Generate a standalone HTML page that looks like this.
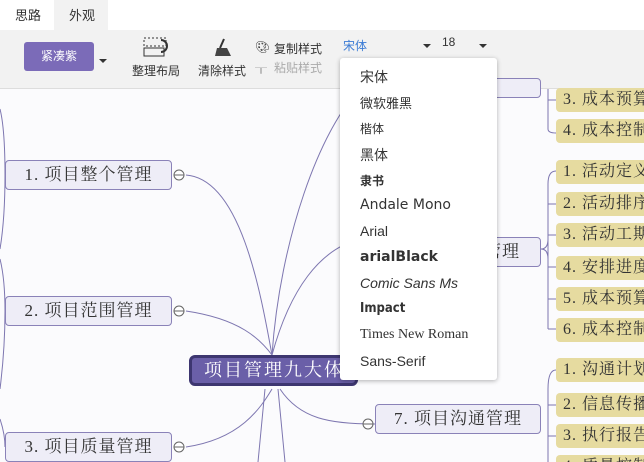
<!DOCTYPE html><html style="overflow:hidden"><head><meta charset="utf-8"><style>
html,body{overflow:hidden;height:462px}
body{margin:0;width:644px;position:relative;background:#fbfbfd;font-family:"Liberation Sans","Noto Sans CJK SC",sans-serif;}
.a{position:absolute}
.tb{font-size:12px;color:#333}
.node{position:absolute;background:#eeedf7;border:1px solid #8a82b8;border-radius:4px;font-family:"Liberation Serif","Noto Serif CJK SC",serif;font-size:17px;color:#333;text-align:center;letter-spacing:1px;box-sizing:border-box}
.leaf{position:absolute;left:556px;width:100px;height:24px;background:#e6dba0;border-radius:4px;font-family:"Liberation Serif","Noto Serif CJK SC",serif;font-size:16px;color:#333;line-height:24px;padding-left:7px;letter-spacing:1px;box-sizing:border-box}
.dd div{position:absolute;left:20px;font-size:14px;color:#333}
</style></head><body>
<div class="a" style="left:0;top:0;width:644px;height:30px;background:#fff"></div>
<div class="a" style="left:54px;top:0;width:54px;height:30px;background:#f2f2f2"></div>
<div class="a tb" style="left:15px;top:5px;font-size:13px">思路</div>
<div class="a tb" style="left:69px;top:5px;font-size:13px">外观</div>
<div class="a" style="left:0;top:30px;width:644px;height:58px;background:#f2f2f2;border-bottom:1px solid #ddd"></div>
<div class="a" style="left:24px;top:42px;width:70px;height:29px;background:#7b6bb8;border-radius:3px;color:#fff;font-size:12px;text-align:center;line-height:29px">紧凑紫</div>
<div class="a" style="left:99px;top:59px;border:4px solid transparent;border-top:4px solid #333"></div>
<svg class="a" style="left:143px;top:36px" width="28" height="24"><rect x="1" y="2" width="22" height="8" fill="none" stroke="#333" stroke-dasharray="2 2"/><rect x="1" y="12" width="20" height="8" fill="none" stroke="#333"/><path d="M18 4a6 6 0 0 1 0 12" fill="none" stroke="#333" stroke-width="2"/></svg>
<div class="a tb" style="left:132px;top:62px">整理布局</div>
<svg class="a" style="left:212px;top:37px" width="22" height="22"><path d="M12 2l-4 9" stroke="#333" stroke-width="2"/><path d="M5 11l10 0 4 8H3z" fill="#444"/></svg>
<div class="a tb" style="left:198px;top:62px">清除样式</div>
<div class="a tb" style="left:255px;top:40px">🎨︎</div>
<div class="a tb" style="left:274px;top:40px">复制样式</div>
<div class="a tb" style="left:255px;top:59px;color:#aaa">┰</div>
<div class="a tb" style="left:274px;top:59px;color:#aaa">粘贴样式</div>
<div class="a tb" style="left:343px;top:37px;color:#3a7bd5">宋体</div>
<div class="a" style="left:423px;top:44px;border:4px solid transparent;border-top:4px solid #333"></div>
<div class="a tb" style="left:442px;top:35px">18</div>
<div class="a" style="left:479px;top:44px;border:4px solid transparent;border-top:4px solid #333"></div>
<svg class="a" style="left:0;top:89px" width="644" height="373"><g fill="none" stroke="#7d76b0" stroke-width="1">
<path d="M186 86C240 90 260 200 272 266"/><path d="M186 222C240 230 260 250 272 266"/><path d="M186 358C240 350 260 320 272 300"/><path d="M272 266C280 150 320 40 360 0"/><path d="M272 266C290 200 320 160 360 150"/><path d="M280 300C300 330 330 335 375 335"/><path d="M265 300L258 373"/><path d="M278 300L285 373"/>
<path d="M0 20Q5 40 5 86Q5 130 0 160"/><path d="M0 170Q5 190 5 222Q5 260 0 300"/><path d="M0 330Q5 345 5 358"/><path d="M548 0L548 40Q548 44 556 44"/><path d="M548 11L556 11"/>
<path d="M548 95L548 240M548 95Q548 82 556 82M548 115L556 115M548 146L556 146M548 178L556 178M548 210L556 210M548 240L556 240"/>
<path d="M541 160Q548 160 548 150M541 160Q548 160 548 170"/>
<path d="M548 300L548 373M548 300Q548 281 556 281M548 316L556 316M548 347L556 347"/>
</g><g fill="#fff" stroke="#666"><circle cx="179" cy="86" r="5"/><circle cx="179" cy="222" r="5"/><circle cx="179" cy="358" r="5"/><circle cx="368" cy="335" r="5"/></g>
<path d="M174 86h10M174 222h10M174 358h10M363 335h10" stroke="#666"/></svg>
<div class="node" style="left:5px;top:160px;width:167px;height:30px;line-height:28px">1. 项目整个管理</div>
<div class="node" style="left:5px;top:296px;width:167px;height:30px;line-height:28px">2. 项目范围管理</div>
<div class="node" style="left:5px;top:432px;width:167px;height:30px;line-height:28px">3. 项目质量管理</div>
<div class="node" style="left:375px;top:404px;width:166px;height:30px;line-height:28px">7. 项目沟通管理</div>
<div class="node" style="left:470px;top:237px;width:71px;height:30px;line-height:28px;text-align:right;padding-right:20px">管理</div>
<div class="node" style="left:470px;top:78px;width:71px;height:20px"></div>
<div class="a" style="left:189px;top:355px;width:169px;height:31px;background:#6a5fa8;border:3px solid #3d3670;border-radius:6px;box-sizing:border-box;color:#fff;font-family:'Liberation Serif','Noto Serif CJK SC',serif;font-size:18px;line-height:25px;padding-left:12px;letter-spacing:2px;white-space:nowrap;overflow:hidden">项目管理九大体系</div>
<div class="leaf" style="top:88px">3. 成本预算</div>
<div class="leaf" style="top:119px">4. 成本控制</div>
<div class="leaf" style="top:160px">1. 活动定义</div>
<div class="leaf" style="top:192px">2. 活动排序</div>
<div class="leaf" style="top:223px">3. 活动工期</div>
<div class="leaf" style="top:256px">4. 安排进度</div>
<div class="leaf" style="top:287px">5. 成本预算</div>
<div class="leaf" style="top:318px">6. 成本控制</div>
<div class="leaf" style="top:358px">1. 沟通计划</div>
<div class="leaf" style="top:393px">2. 信息传播</div>
<div class="leaf" style="top:424px">3. 执行报告</div>
<div class="leaf" style="top:455px">4. 质量控制</div>
<div class="a dd" style="left:340px;top:58px;width:157px;height:322px;background:#fff;border-radius:3px;box-shadow:0 1px 5px rgba(0,0,0,.3)">
<div style="top:9px">宋体</div>
<div style="top:35px;font-size:13px">微软雅黑</div>
<div style="top:62px;font-size:12px">楷体</div>
<div style="top:87px">黑体</div>
<div style="top:114px;font-size:12px;font-weight:bold">隶书</div>
<div style="top:139px;font-family:'DejaVu Sans',sans-serif">Andale Mono</div>
<div style="top:165px">Arial</div>
<div style="top:191px;font-weight:900;font-family:'DejaVu Sans',sans-serif">arialBlack</div>
<div style="top:217px;font-style:italic">Comic Sans Ms</div>
<div style="top:243px;font-weight:bold;font-family:'DejaVu Sans Condensed','DejaVu Sans',sans-serif;font-size:13px">Impact</div>
<div style="top:269px;font-family:'Liberation Serif',serif">Times New Roman</div>
<div style="top:295px">Sans-Serif</div>
</div>
</body></html>
